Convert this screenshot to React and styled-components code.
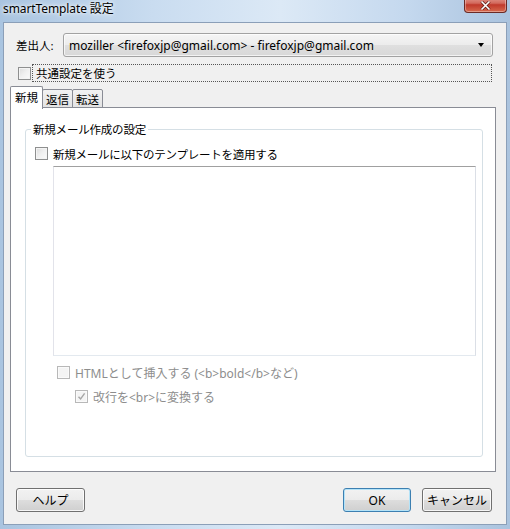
import React from "react";
import styled, { createGlobalStyle, css } from "styled-components";

const Global = createGlobalStyle`
  html, body { margin: 0; padding: 0; }
  body {
    width: 510px; height: 529px; overflow: hidden;
    font-family: "Noto Sans", "Noto Sans CJK JP", sans-serif;
    font-size: 11.5px;
    color: #000;
  }
`;

const Window = styled.div`
  width: 510px;
  height: 529px;
  box-sizing: border-box;
  display: flex;
  flex-direction: column;
  background: linear-gradient(90deg, #a9c4e0 0%, #c9dcf0 30%, #dce9f6 55%, #c4d8ee 80%, #aac3de 100%);
`;

const TitleBar = styled.div`
  height: 22px;
  display: flex;
  align-items: flex-start;
  justify-content: space-between;
  padding: 0 3px 0 3px;
`;

const Title = styled.div`
  font-size: 12px;
  line-height: 12px;
  padding-top: 3px;
  color: #000;
  text-shadow: 0 0 6px #fff, 0 0 3px #fff;
  letter-spacing: -0.1px;
`;

const CloseButton = styled.div`
  width: 43px;
  height: 17px;
  margin-top: -4px;
  box-sizing: border-box;
  border: 1px solid #6b2a25;
  border-top: none;
  border-radius: 0 0 4px 4px;
  background: linear-gradient(#e6a49a 0%, #d2695c 45%, #c0392b 55%, #d66a4e 100%);
  box-shadow: inset 0 0 0 1px rgba(255,255,255,0.35);
  display: flex;
  align-items: center;
  justify-content: center;
  padding-top: 3px;
`;

const Client = styled.div`
  flex: 1;
  margin: 0 3px 4px 3px;
  border: 1px solid #8b9fb8;
  background: #f0f0f0;
  display: flex;
  flex-direction: column;
`;

const SenderRow = styled.div`
  display: flex;
  align-items: center;
  margin-top: 10px;
  padding-left: 12px;
  height: 24px;
`;

const Label = styled.div`
  width: 47px;
`;

const Combo = styled.div`
  width: 430px;
  height: 24px;
  box-sizing: border-box;
  border: 1px solid #a2a2a2;
  border-radius: 3px;
  background: linear-gradient(#f5f5f5 0%, #ececec 50%, #dfdfdf 51%, #d8d8d8 100%);
  box-shadow: inset 0 0 0 1px rgba(255,255,255,0.7);
  display: flex;
  align-items: center;
  justify-content: space-between;
  padding: 0 8px 0 5px;
  font-size: 12px;
`;

const Arrow = styled.div`
  width: 0; height: 0;
  border-left: 3.5px solid transparent;
  border-right: 3.5px solid transparent;
  border-top: 4px solid #000;
`;

const CommonRow = styled.div`
  display: flex;
  align-items: center;
  margin-top: 7px;
  padding-left: 14px;
  height: 18px;
`;

const Focus = styled.div`
  margin-left: 1px;
  width: 460px;
  height: 18px;
  box-sizing: border-box;
  border: 1px dotted #555;
  display: flex;
  align-items: center;
  padding-left: 3px;
`;

const Box = styled.span`
  width: 13px;
  height: 13px;
  box-sizing: border-box;
  flex: none;
  display: inline-flex;
  align-items: center;
  justify-content: center;
  border: 1px solid #8e8f8f;
  background: linear-gradient(135deg, #dcdcdc 0%, #f0f0f0 50%, #fbfbfb 100%);
  box-shadow: inset 0 0 0 1px #f4f4f4;
  ${(p) => p.$disabled && css`
    border-color: #b8b8b8;
    background: #f4f4f4;
    box-shadow: inset 0 0 0 1px #fafafa;
  `}
`;

const CheckLabel = styled.span`
  margin-left: ${(p) => p.$gap || 6}px;
  color: ${(p) => (p.$disabled ? "#8d8d8d" : "#000")};
  font-size: ${(p) => p.$size || 11.5}px;
  letter-spacing: ${(p) => p.$ls || 0}px;
  white-space: nowrap;
`;

const Tabs = styled.div`
  display: flex;
  align-items: flex-end;
  margin: 4px 0 0 6px;
  height: 22px;
  position: relative;
  z-index: 1;
`;

const Tab = styled.div`
  box-sizing: border-box;
  height: ${(p) => (p.$active ? 23 : 19)}px;
  width: ${(p) => p.$w}px;
  border: 1px solid #898c95;
  border-bottom: ${(p) => (p.$active ? "none" : "1px solid #898c95")};
  margin-left: ${(p) => (p.$first ? 0 : -1)}px;
  margin-bottom: ${(p) => (p.$active ? -1 : 0)}px;
  border-radius: 2px 2px 0 0;
  background: ${(p) => (p.$active ? "#fff" : "linear-gradient(#f2f2f2, #e3e3e3)")};
  display: flex;
  align-items: center;
  justify-content: center;
  padding-bottom: ${(p) => (p.$active ? 2 : 0)}px;
  ${(p) => p.$active && css`z-index: 2;`}
`;

const Panel = styled.div`
  margin-left: 6px;
  width: 486px;
  height: 365px;
  box-sizing: border-box;
  margin-top: -1px;
  border: 1px solid #898c95;
  background: #fff;
  padding: 21px 0 0 14px;
`;

const Group = styled.div`
  position: relative;
  width: 458px;
  height: 328px;
  box-sizing: border-box;
  border: 1px solid #d5dfe5;
  border-radius: 3px;
  padding: 16px 0 0 9px;
`;

const Legend = styled.div`
  position: absolute;
  top: -8px;
  left: 5px;
  background: #fff;
  padding: 0 2px;
  line-height: 16px;
  letter-spacing: -0.2px;
`;

const Row = styled.div`
  display: flex;
  align-items: center;
  height: 15px;
  margin-left: ${(p) => p.$indent || 0}px;
  margin-top: ${(p) => p.$top || 0}px;
`;

const TextArea = styled.div`
  width: 423px;
  height: 190px;
  box-sizing: border-box;
  margin: 5px 0 0 18px;
  border: 1px solid #abadb3;
  border-top-color: #a0a0a0;
  border-right-color: #dbdfe6;
  border-bottom-color: #e3e9ef;
  border-left-color: #e2e3ea;
  background: #fff;
`;

const Buttons = styled.div`
  display: flex;
  align-items: center;
  margin-top: 16px;
  padding: 0 14px 0 12px;
`;

const Spacer = styled.div`flex: 1;`;

const Button = styled.div`
  width: ${(p) => p.$w}px;
  height: 24px;
  box-sizing: border-box;
  margin-left: ${(p) => p.$ml || 0}px;
  border: 1px solid ${(p) => (p.$focus ? "#3c7fb1" : "#707070")};
  border-radius: 3px;
  background: linear-gradient(#f2f2f2 0%, #ebebeb 50%, #dddddd 51%, #cfcfcf 100%);
  box-shadow: inset 0 0 0 1px ${(p) => (p.$focus ? "#b4e3f8" : "rgba(255,255,255,0.8)")};
  display: flex;
  align-items: center;
  justify-content: center;
  font-size: 12px;
`;

const Check = ({ disabled, checked }) => (
  <Box $disabled={disabled}>
    {checked && (
      <svg width="9" height="9" viewBox="0 0 9 9">
        <path d="M1.5 4.8 L3.6 7 L7.6 1.4" fill="none" stroke={disabled ? "#a6a6a6" : "#333"} strokeWidth="1.4" />
      </svg>
    )}
  </Box>
);

export default function App() {
  return (
    <>
      <Global />
      <Window>
        <TitleBar>
          <Title>smartTemplate 設定</Title>
          <CloseButton>
            <svg width="11" height="9" viewBox="0 0 11 9">
              <path d="M1.5 0.5 L9.5 8.5 M9.5 0.5 L1.5 8.5" stroke="#5a1a14" strokeWidth="3" />
              <path d="M1.5 0.5 L9.5 8.5 M9.5 0.5 L1.5 8.5" stroke="#fff" strokeWidth="1.6" />
            </svg>
          </CloseButton>
        </TitleBar>
        <Client>
          <SenderRow>
            <Label>差出人:</Label>
            <Combo>
              <span>moziller &lt;firefoxjp@gmail.com&gt; - firefoxjp@gmail.com</span>
              <Arrow />
            </Combo>
          </SenderRow>
          <CommonRow>
            <Check />
            <Focus>共通設定を使う</Focus>
          </CommonRow>
          <Tabs>
            <Tab $active $first $w={33}>新規</Tab>
            <Tab $w={31}>返信</Tab>
            <Tab $w={31}>転送</Tab>
          </Tabs>
          <Panel>
            <Group>
              <Legend>新規メール作成の設定</Legend>
              <Row>
                <Check />
                <CheckLabel $gap={5} $ls={-0.25}>新規メールに以下のテンプレートを適用する</CheckLabel>
              </Row>
              <TextArea />
              <Row $indent={22} $top={9}>
                <Check disabled />
                <CheckLabel $disabled $gap={5} $size={12}>HTMLとして挿入する (&lt;b&gt;bold&lt;/b&gt;など)</CheckLabel>
              </Row>
              <Row $indent={40} $top={9}>
                <Check disabled checked />
                <CheckLabel $disabled $gap={5} $size={12}>改行を&lt;br&gt;に変換する</CheckLabel>
              </Row>
            </Group>
          </Panel>
          <Buttons>
            <Button $w={69}>ヘルプ</Button>
            <Spacer />
            <Button $w={68} $focus>OK</Button>
            <Button $w={70} $ml={11}>キャンセル</Button>
          </Buttons>
        </Client>
      </Window>
    </>
  );
}
